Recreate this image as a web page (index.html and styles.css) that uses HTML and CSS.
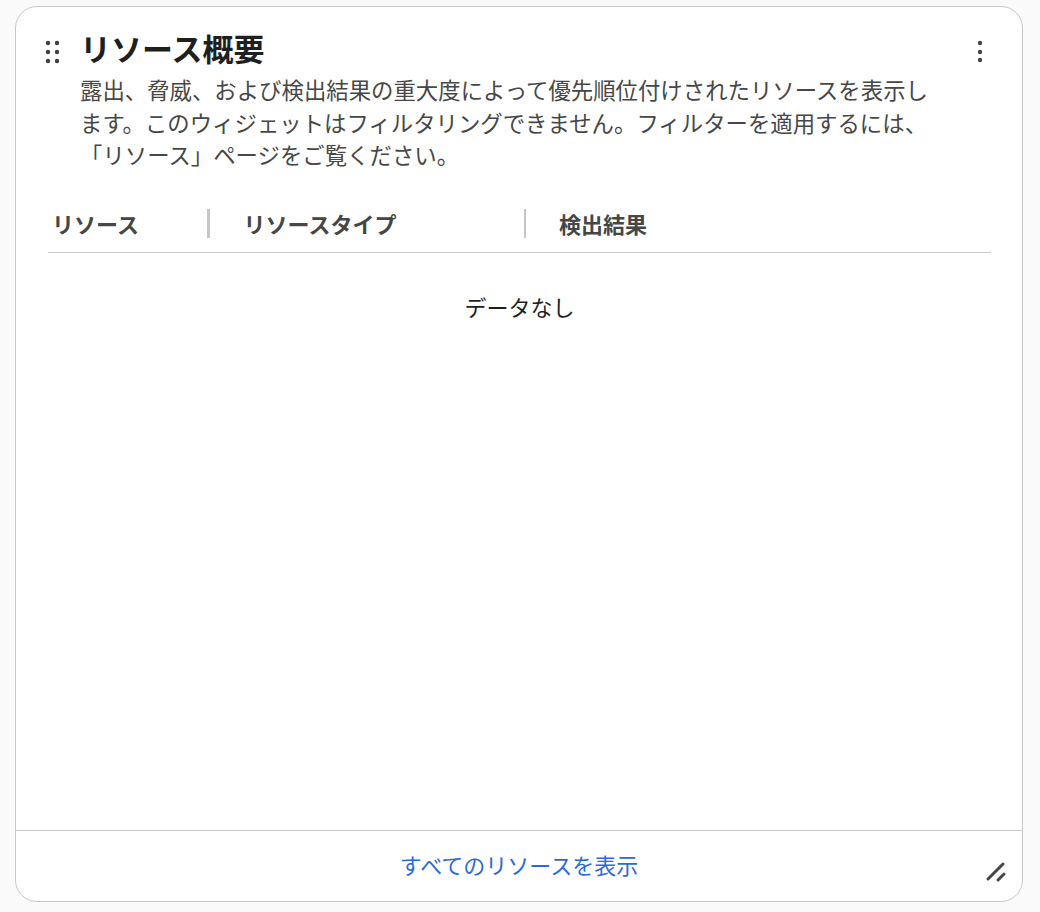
FILE: index.html
```html
<!DOCTYPE html>
<html lang="ja">
<head>
<meta charset="utf-8">
<title>リソース概要</title>
<link rel="stylesheet" href="styles.css">
</head>
<body>
<div class="card">
  <div class="card-header">
    <svg class="drag" width="18" height="28" viewBox="0 0 18 28" aria-hidden="true">
      <circle cx="4" cy="7" r="2.2"/><circle cx="13" cy="7" r="2.2"/>
      <circle cx="4" cy="16" r="2.2"/><circle cx="13" cy="16" r="2.2"/>
      <circle cx="4" cy="25" r="2.2"/><circle cx="13" cy="25" r="2.2"/>
    </svg>
    <div class="heading">
      <h1 class="title">リソース概要</h1>
      <p class="desc">露出、脅威、および検出結果の重大度によって優先順位付けされたリソースを表示します。このウィジェットはフィルタリングできません。フィルターを適用するには、「リソース」ページをご覧ください。</p>
    </div>
    <svg class="kebab" width="20" height="28" viewBox="0 0 20 28" aria-hidden="true">
      <circle cx="10" cy="7" r="2.2"/><circle cx="10" cy="16" r="2.2"/><circle cx="10" cy="24" r="2.2"/>
    </svg>
  </div>
  <div class="table">
    <div class="thead">
      <div class="th th1">リソース</div>
      <span class="sep"></span>
      <div class="th th2">リソースタイプ</div>
      <span class="sep"></span>
      <div class="th th3">検出結果</div>
    </div>
    <div class="empty">データなし</div>
  </div>
  <div class="card-footer">
    <a class="link" href="#">すべてのリソースを表示</a>
  </div>
  <svg class="resize" width="24" height="24" viewBox="0 0 24 24" aria-hidden="true">
    <line x1="4" y1="18" x2="19" y2="3"/>
    <line x1="14" y1="19" x2="20" y2="13"/>
  </svg>
</div>
</body>
</html>
```
FILE: styles.css
```css
html, body {
  margin: 0;
  padding: 0;
  background: #fafafa;
}
body {
  font-family: "Noto Sans CJK JP", "Noto Sans", sans-serif;
  width: 1040px;
  height: 912px;
  overflow: hidden;
}
.card {
  position: relative;
  box-sizing: border-box;
  margin: 6px 0 0 15px;
  width: 1008px;
  height: 896px;
  background: #ffffff;
  border: 1px solid #c8c8c8;
  border-radius: 22px;
  display: flex;
  flex-direction: column;
}
.card-header {
  display: flex;
  align-items: flex-start;
  padding: 23px 32px 0 28px;
}
.drag {
  flex: none;
  margin-top: 6px;
  margin-right: 19px;
  fill: #3c3f3e;
}
.heading {
  flex: 1;
  min-width: 0;
}
.title {
  margin: 0 0 7px -1px;
  font-size: 31px;
  line-height: 36px;
  font-weight: 700;
  color: #1f1f1f;
}
.desc {
  margin: 0 0 0 -1px;
  max-width: 860px;
  font-size: 22.4px;
  line-height: 32.5px;
  color: #474747;
}
.kebab {
  flex: none;
  margin-top: 6px;
  fill: #444746;
}
.table {
  margin: 24px 31px 0 32px;
}
.thead {
  display: flex;
  align-items: center;
  height: 57px;
  border-bottom: 1px solid #c8c8c8;
}
.th {
  box-sizing: border-box;
  font-size: 22px;
  font-weight: 700;
  color: #444746;
  white-space: nowrap;
}
.th1 {
  width: 159px;
  padding-left: 4px;
}
.th2 {
  width: 314px;
  padding-left: 34px;
}
.th3 {
  padding-left: 33px;
}
.sep {
  flex: none;
  width: 2.5px;
  height: 29px;
  background: #c4c7c5;
}
.empty {
  margin-top: 37px;
  text-align: center;
  font-size: 22px;
  line-height: 32px;
  color: #1f1f1f;
}
.card-footer {
  box-sizing: border-box;
  margin-top: auto;
  height: 71px;
  padding-bottom: 5px;
  border-top: 1px solid #c8c8c8;
  display: flex;
  align-items: center;
  justify-content: center;
}
.link {
  font-size: 22px;
  color: #2b6bd6;
  text-decoration: none;
}
.resize {
  position: absolute;
  right: 14px;
  bottom: 16px;
  stroke: #444746;
  stroke-width: 3;
  stroke-linecap: round;
}
```
